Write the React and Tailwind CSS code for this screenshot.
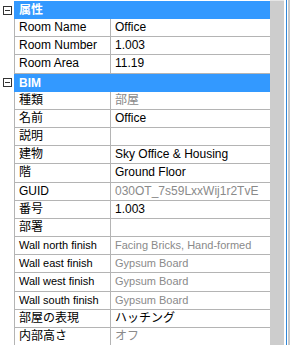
import React from 'react';

const font = { fontFamily: '"Liberation Sans", "Noto Sans CJK JP", sans-serif' };

const groups = [
  {
    title: '属性',
    rows: [
      { label: 'Room Name', value: 'Office' },
      { label: 'Room Number', value: '1.003' },
      { label: 'Room Area', value: '11.19' },
    ],
  },
  {
    title: 'BIM',
    rows: [
      { label: '種類', value: '部屋', dim: true },
      { label: '名前', value: 'Office' },
      { label: '説明', value: '' },
      { label: '建物', value: 'Sky Office & Housing' },
      { label: '階', value: 'Ground Floor' },
      { label: 'GUID', value: '030OT_7s59LxxWij1r2TvE', dim: true },
      { label: '番号', value: '1.003' },
      { label: '部署', value: '' },
      { label: 'Wall north finish', value: 'Facing Bricks, Hand-formed', dim: true, small: true },
      { label: 'Wall east finish', value: 'Gypsum Board', dim: true, small: true },
      { label: 'Wall west finish', value: 'Gypsum Board', dim: true, small: true },
      { label: 'Wall south finish', value: 'Gypsum Board', dim: true, small: true },
      { label: '部屋の表現', value: 'ハッチング' },
      { label: '内部高さ', value: 'オフ', dim: true },
    ],
  },
];

const CollapseBox = () => (
  <div className="w-[9px] h-[9px] border border-[#333] flex items-center justify-center bg-white">
    <div className="w-[5px] h-[1px] bg-[#333]" />
  </div>
);

const GroupHeader = ({ title }) => (
  <div className="flex h-[18.17px]">
    <div className="w-[14px] flex items-center justify-center pl-[1px]">
      <CollapseBox />
    </div>
    <div className="flex-1 bg-[#3399ff] text-white font-bold text-[12px] leading-[18px] pl-[5px]">
      {title}
    </div>
  </div>
);

const Row = ({ label, value, dim, small }) => (
  <div className="flex h-[18.17px]">
    <div className="w-[14px]" />
    <div className="flex-1 flex border-l border-b border-[#b4b4b4]">
      <div
        className={`w-[96px] shrink-0 border-r border-[#b4b4b4] pl-[4px] text-black whitespace-nowrap overflow-hidden ${
          small ? 'text-[11px] leading-[17px]' : 'text-[12px] leading-[17px]'
        }`}
      >
        {label}
      </div>
      <div
        className={`flex-1 pl-[4px] whitespace-nowrap overflow-hidden ${
          small ? 'text-[11px] leading-[17px]' : 'text-[12px] leading-[17px]'
        } ${dim ? 'text-[#8a8a8a]' : 'text-black'}`}
      >
        {value}
      </div>
    </div>
  </div>
);

export default function App() {
  return (
    <div className="w-[293px] h-[345px] bg-white overflow-hidden flex" style={font}>
      <div className="w-[270px] pt-[1px]">
        {groups.map((g) => (
          <div key={g.title}>
            <GroupHeader title={g.title} />
            {g.rows.map((r) => (
              <Row key={r.label} {...r} />
            ))}
          </div>
        ))}
      </div>
      <div className="w-[14px] bg-[#cdcdcd] border-t border-[#e6e6e6]" />
      <div className="w-[2px]" />
      <div className="w-[1px] bg-[#2f86d8]" />
      <div className="w-[1px]" />
      <div className="w-[2px] bg-[#c8c8c8]" />
    </div>
  );
}
